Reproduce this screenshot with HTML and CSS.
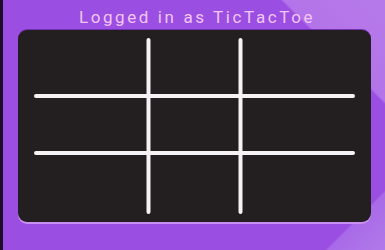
FILE: index.html
```html
<!DOCTYPE html>
<html>
<head>
<meta charset="utf-8">
<link rel="stylesheet" href="styles.css">
</head>
<body>
<div class="edge"></div>
<main class="screen">
  <header class="title">Logged in as TicTacToe</header>
  <section class="board">
    <svg class="grid" width="353" height="192" viewBox="0 0 353 192">
      <g stroke="#f4f2f4" stroke-width="4" stroke-linecap="round">
        <line x1="130.5" y1="10" x2="130.5" y2="182"/>
        <line x1="222.5" y1="10" x2="222.5" y2="182"/>
        <line x1="18" y1="66" x2="335" y2="66"/>
        <line x1="18" y1="123" x2="335" y2="123"/>
      </g>
    </svg>
  </section>
</main>
</body>
</html>
```
FILE: styles.css
```css
html, body {
  margin: 0;
  padding: 0;
  width: 385px;
  height: 250px;
  overflow: hidden;
}
body {
  display: flex;
  background:
    linear-gradient(225deg, #b77ae9 0%, #b274e8 16%, rgba(155,78,226,0) 16.5%),
    linear-gradient(315deg, #b07aea 0%, #a96ae7 9%, rgba(155,78,226,0) 9.5%),
    #9b4ee2;
}
.edge {
  width: 3px;
  background: #1c0d28;
  flex: none;
}
.screen {
  flex: 1;
  display: flex;
  flex-direction: column;
  padding-left: 15px;
}
.title {
  height: 30px;
  box-sizing: border-box;
  padding-top: 4px;
  display: flex;
  align-items: center;
  justify-content: center;
  padding-right: 9px;
  font-family: Roboto, "Noto Sans", sans-serif;
  font-size: 17px;
  letter-spacing: 2.6px;
  color: #f2c6f2;
}
.board {
  width: 353px;
  height: 192px;
  background: #231f20;
  border-radius: 9px;
  box-shadow: 0 2px 0 #c98ef1, 0 -1px 0 #7430b0;
  display: flex;
}
.grid {
  display: block;
}
```
